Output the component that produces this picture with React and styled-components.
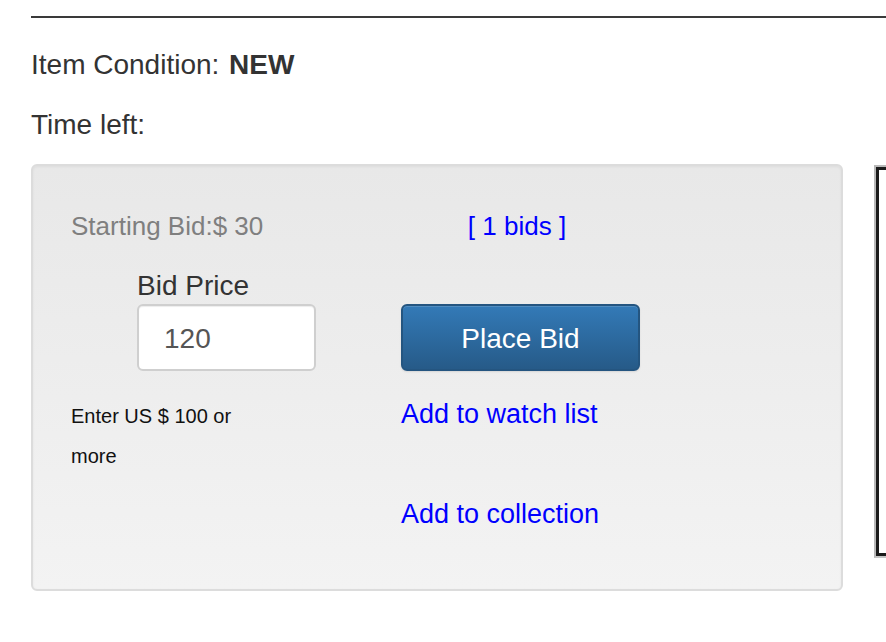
import React from "react";
import styled, { createGlobalStyle } from "styled-components";

const Global = createGlobalStyle`
  html, body { margin: 0; padding: 0; background: #fff; overflow: hidden; }
  body { font-family: "Liberation Sans", Arial, Helvetica, sans-serif; color: #333; }
`;

const Page = styled.div`
  padding: 16px 0 0 31px;
  width: 886px;
  box-sizing: border-box;
  overflow: hidden;
`;

const Rule = styled.div`
  height: 2px;
  background: #3a3a3a;
  margin-right: -40px;
`;

const InfoLine = styled.div`
  font-size: 28px;
  line-height: 40px;
  margin-top: ${(p) => p.$top}px;
  white-space: nowrap;
`;

const Strong = styled.b`
  font-weight: 700;
  margin-left: 2px;
`;

const Row = styled.div`
  display: flex;
  align-items: flex-start;
  gap: 31px;
  margin-top: 19px;
`;

const Well = styled.div`
  width: 812px;
  height: 427px;
  flex: none;
  box-sizing: border-box;
  border: 2px solid #dcdcdc;
  border-radius: 6px;
  background: linear-gradient(to bottom, #e8e8e8 0%, #f3f3f3 100%);
  box-shadow: inset 0 1px 3px rgba(0, 0, 0, 0.05), 0 1px 0 rgba(255, 255, 255, 0.1);
  padding: 40px 0 0 38px;
`;

const Grid = styled.div`
  display: grid;
  grid-template-columns: 330px 240px;
  grid-template-rows: 40px 38px 67px auto;
`;

const StartBid = styled.div`
  font-size: 26px;
  line-height: 40px;
  color: #7f7f7f;
  white-space: nowrap;
`;

const BidsLink = styled.a`
  font-size: 26px;
  line-height: 40px;
  color: #0000ff;
  text-align: center;
  text-decoration: none;
  white-space: nowrap;
  padding-right: 8px;
`;

const Label = styled.div`
  grid-column: 1;
  margin-top: 21px;
  padding-left: 66px;
  font-size: 28px;
  line-height: 38px;
  color: #333;
`;

const InputCell = styled.div`
  grid-column: 1;
  grid-row: 3;
  padding-left: 66px;
  margin-top: 20px;
`;

const PriceInput = styled.input`
  box-sizing: border-box;
  width: 179px;
  height: 67px;
  border: 2px solid #cfcfcf;
  border-radius: 6px;
  background: #fff;
  padding: 3px 0 0 25px;
  font-family: "Liberation Sans", Arial, sans-serif;
  font-size: 28px;
  color: #555;
  outline: none;
  box-shadow: inset 0 1px 1px rgba(0, 0, 0, 0.075);
`;

const ButtonCell = styled.div`
  grid-column: 2;
  grid-row: 3;
  margin-top: 20px;
`;

const PlaceBid = styled.button`
  box-sizing: border-box;
  width: 239px;
  height: 67px;
  border: 2px solid #245580;
  border-radius: 6px;
  background: linear-gradient(to bottom, #337ab7 0%, #265a88 100%);
  color: #fff;
  font-family: "Liberation Sans", Arial, sans-serif;
  font-size: 28px;
  padding: 3px 0 0;
  box-shadow: inset 0 1px 0 rgba(255, 255, 255, 0.15), 0 1px 2px rgba(0, 0, 0, 0.1);
  cursor: pointer;
`;

const Hint = styled.div`
  grid-column: 1;
  grid-row: 4;
  margin-top: 45px;
  max-width: 185px;
  font-size: 20px;
  line-height: 40px;
  color: #111;
`;

const Links = styled.div`
  grid-column: 2;
  grid-row: 4;
  margin-top: 45px;
  display: flex;
  flex-direction: column;
  gap: 64px;
`;

const ActionLink = styled.a`
  font-size: 27px;
  line-height: 36px;
  color: #0000ff;
  text-decoration: none;
  white-space: nowrap;
`;

const SideFrame = styled.div`
  flex: none;
  width: 300px;
  height: 393px;
  margin-top: 1px;
  box-sizing: border-box;
  border-left: 2px solid #b8b8b8;
  border-top: 2px solid #b8b8b8;
  border-bottom: 2px solid #c4c4c4;
`;

const SideInner = styled.div`
  height: 100%;
  box-sizing: border-box;
  border-left: 3px solid #1a1a1a;
  border-top: 3px solid #1a1a1a;
  border-bottom: 3px solid #1a1a1a;
  background: #fff;
`;

export default function App() {
  return (
    <>
      <Global />
      <Page>
        <Rule />
        <InfoLine $top={27}>
          Item Condition: <Strong>NEW</Strong>
        </InfoLine>
        <InfoLine $top={20}>Time left:</InfoLine>
        <Row>
          <Well>
            <Grid>
              <StartBid>Starting Bid:$ 30</StartBid>
              <BidsLink href="#">[ 1 bids ]</BidsLink>
              <Label>Bid Price</Label>
              <InputCell>
                <PriceInput defaultValue="120" />
              </InputCell>
              <ButtonCell>
                <PlaceBid>Place Bid</PlaceBid>
              </ButtonCell>
              <Hint>Enter US $ 100 or more</Hint>
              <Links>
                <ActionLink href="#">Add to watch list</ActionLink>
                <ActionLink href="#">Add to collection</ActionLink>
              </Links>
            </Grid>
          </Well>
          <SideFrame>
            <SideInner />
          </SideFrame>
        </Row>
      </Page>
    </>
  );
}
